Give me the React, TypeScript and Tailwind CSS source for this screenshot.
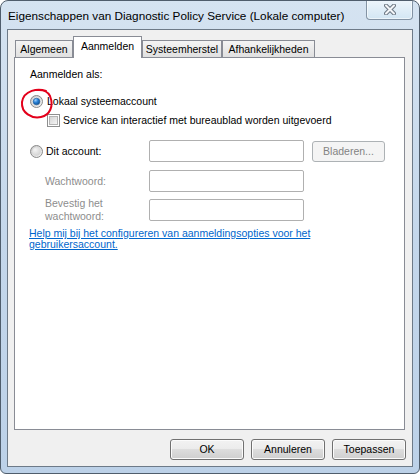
import React from 'react'

const Radio = ({ checked, id }: { checked?: boolean; id: string }) => (
  <svg width="13" height="13" viewBox="0 0 13 13" className="shrink-0">
    <defs>
      <linearGradient id={`ring-${id}`} x1="0" y1="0" x2="1" y2="1">
        <stop offset="0" stopColor="#c6c6c6" />
        <stop offset="1" stopColor="#f6f6f6" />
      </linearGradient>
      <radialGradient id={`in-${id}`} cx="0.35" cy="0.3" r="0.8">
        <stop offset="0" stopColor="#f4f4f4" />
        <stop offset="1" stopColor="#cfcfcf" />
      </radialGradient>
      <radialGradient id={`dot-${id}`} cx="0.35" cy="0.3" r="0.8">
        <stop offset="0" stopColor="#9fd2ff" />
        <stop offset="0.45" stopColor="#2b82d6" />
        <stop offset="1" stopColor="#0b4a8c" />
      </radialGradient>
    </defs>
    <circle cx="6.5" cy="6.5" r="6" fill={`url(#ring-${id})`} stroke="#8a8a8a" strokeWidth="1" />
    <circle cx="6.5" cy="6.5" r="4.2" fill={`url(#in-${id})`} />
    {checked && <circle cx="6.5" cy="6.5" r="3.3" fill={`url(#dot-${id})`} stroke="#1b5a99" strokeWidth="0.6" />}
  </svg>
)

const Checkbox = () => (
  <div className="w-[13px] h-[13px] shrink-0 border border-[#8e8f8f] bg-white p-[1px]">
    <div className="w-full h-full border border-[#b4b4b4] bg-gradient-to-br from-[#d4d4d4] to-[#f5f5f5]" />
  </div>
)

const Field = () => (
  <div className="w-[155px] h-[22px] rounded-[2px] border border-[#b0b0b0] bg-white shrink-0" />
)

const Button = ({ children }: { children: React.ReactNode }) => (
  <button className="w-[74px] h-[21px] rounded-[3px] border border-[#707070] bg-[linear-gradient(#f2f2f2_0%,#ebebeb_50%,#dddddd_50%,#cfcfcf_100%)] text-[10.5px] leading-none text-black shadow-[inset_0_0_0_1px_#fbfbfb]">
    {children}
  </button>
)

const tabs = [
  { label: 'Algemeen', w: 'w-[58px]' },
  { label: 'Aanmelden', w: 'w-[69px]', active: true },
  { label: 'Systeemherstel', w: 'w-[80px]' },
  { label: 'Afhankelijkheden', w: 'w-[93px]' },
]

export default function App() {
  return (
    <div className="relative w-[420px] h-[474px] overflow-hidden rounded-t-[8px] rounded-b-[6px] border border-[#4f5d6c] bg-gradient-to-b from-[#d5e3f1] via-[#c4d7eb] to-[#bcd1e8] font-['Liberation_Sans',Arial,sans-serif] text-black">
      {/* title bar */}
      <div className="flex justify-between h-[28px]">
        <span className="self-center pl-[7px] pt-[1px] text-[11.75px] text-black">
          Eigenschappen van Diagnostic Policy Service (Lokale computer)
        </span>
        <div className="-mt-px mr-[6px] w-[47px] h-[20px] flex items-center justify-center rounded-b-[4px] border border-t-0 border-[#8393a4] bg-gradient-to-b from-[#eef6fc] to-[#d3e6f3] shadow-[inset_0_0_0_1px_#ffffff90]">
          <svg width="12" height="11" viewBox="0 0 12 11">
            <path d="M2 1.5 L10 9.5 M10 1.5 L2 9.5" stroke="#6d7884" strokeWidth="4" strokeLinecap="round" />
            <path d="M2 1.5 L10 9.5 M10 1.5 L2 9.5" stroke="#f4f6f8" strokeWidth="2" strokeLinecap="round" />
          </svg>
        </div>
      </div>

      {/* client area */}
      <div className="mx-[6px] h-[438px] border border-[#6d7a88] bg-[#f0f0f0] flex flex-col">
        {/* tabs */}
        <div className="mt-[6px] ml-[7px] h-[21px] flex items-end relative z-10">
          {tabs.map((t) =>
            t.active ? (
              <div
                key={t.label}
                className={`${t.w} h-[22px] -mb-px border border-b-0 border-[#898c95] bg-white flex items-start justify-center pt-[3px] text-[10.5px] leading-[13px]`}
              >
                {t.label}
              </div>
            ) : (
              <div
                key={t.label}
                className={`${t.w} h-[17px] border border-b-0 border-[#898c95] bg-gradient-to-b from-[#f4f4f4] to-[#e0e0e0] flex items-center justify-center text-[10.5px] leading-[13px]`}
              >
                {t.label}
              </div>
            ),
          )}
        </div>

        {/* panel */}
        <div className="ml-[6px] w-[391px] h-[373px] border border-[#898c95] bg-white text-[10.5px] leading-[13px]">
          <div className="pl-[15px] mt-[10px]">Aanmelden als:</div>

          <div className="mt-[14px] pl-[15px] flex items-center gap-[4px] h-[13px]">
            <Radio checked id="a" />
            <span>Lokaal systeemaccount</span>
          </div>

          <div className="mt-[6px] pl-[32px] flex items-center gap-[3px] h-[13px]">
            <Checkbox />
            <span>Service kan interactief met bureaublad worden uitgevoerd</span>
          </div>

          <div className="mt-[13px] pl-[15px] flex items-center">
            <div className="w-[119px] flex items-center gap-[3px]">
              <Radio id="b" />
              <span>Dit account:</span>
            </div>
            <Field />
            <div className="ml-[8px] w-[73px] h-[21px] rounded-[3px] border border-[#adb2b5] bg-[#f4f4f4] flex items-center justify-center text-[#838383]">
              Bladeren...
            </div>
          </div>

          <div className="mt-[8px] pl-[15px] flex items-center">
            <div className="w-[119px] pl-[15px] text-[#8d8d8d]">Wachtwoord:</div>
            <Field />
          </div>

          <div className="mt-[5px] pl-[15px] flex items-start">
            <div className="w-[119px] pl-[15px] text-[#8d8d8d]">
              Bevestig het
              <br />
              wachtwoord:
            </div>
            <div className="mt-[2px]">
              <Field />
            </div>
          </div>

          <div className="mt-[5px] pl-[14px] leading-[11px]">
            <a href="#" className="text-[#0066cc] underline">
              Help mij bij het configureren van aanmeldingsopties voor het
              <br />
              gebruikersaccount.
            </a>
          </div>
        </div>

        {/* buttons */}
        <div className="mt-[9px] pr-[6px] flex justify-end gap-[7px]">
          <Button>OK</Button>
          <Button>Annuleren</Button>
          <Button>Toepassen</Button>
        </div>
      </div>

      {/* red annotation circle */}
      <svg className="absolute left-[17px] top-[86px] pointer-events-none" width="38" height="34" viewBox="0 0 38 34">
        <path
          d="M28 4 C 20 1, 6 3, 4 15 C 3 26, 14 32, 23 30 C 32 28, 36 19, 32 9 C 30 5, 25 3, 21 3"
          fill="none"
          stroke="#e3001b"
          strokeWidth="2"
          strokeLinecap="round"
        />
      </svg>
    </div>
  )
}
